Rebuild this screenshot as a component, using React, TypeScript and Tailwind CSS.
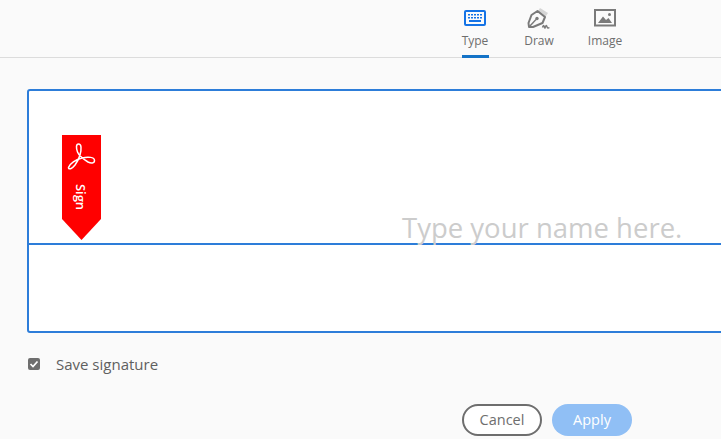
import React from "react";

function Tab({ label, active, icon }: { label: string; active?: boolean; icon: React.ReactNode }) {
  return (
    <div className="flex flex-col items-center h-[58px] pt-[8px] w-[40px]">
      <div className="h-[20px] flex items-center justify-center">{icon}</div>
      <span className="mt-[3px] text-[12px] leading-[20px] text-[#6e6e6e]">{label}</span>
      <div className={`mt-auto h-[3px] w-[27px] ${active ? "bg-[#1473c7]" : ""}`} />
    </div>
  );
}

const Keyboard = (
  <svg width="22" height="16" viewBox="0 0 22 16">
    <rect x="1" y="1" width="20" height="14" rx="1" fill="none" stroke="#1473e6" strokeWidth="2" />
    <g fill="#1473e6">
      <rect x="4" y="4" width="2" height="1.500" /><rect x="7" y="4" width="2" height="1.500" /><rect x="10" y="4" width="2" height="1.500" /><rect x="13" y="4" width="2" height="1.500" /><rect x="16" y="4" width="2" height="1.500" />
      <rect x="4" y="7" width="2" height="1.500" /><rect x="7" y="7" width="2" height="1.500" /><rect x="10" y="7" width="2" height="1.500" /><rect x="13" y="7" width="2" height="1.500" /><rect x="16" y="7" width="2" height="1.500" />
      <rect x="5" y="10" width="12" height="2" />
    </g>
  </svg>
);

const Pen = (
  <svg width="24" height="22" viewBox="0 0 24 22">
    <path d="M13 1 L21 6 L18 10.500 L10.500 5 Z" fill="#d6d6d6" />
    <path d="M10.500 4 L18 10 L15.500 16 L6 20 L2 20 L1.500 16 L4.500 8 Z" fill="none" stroke="#7a7a7a" strokeWidth="2" strokeLinejoin="round" />
    <path d="M2.500 19.500 L9 12.500" stroke="#7a7a7a" strokeWidth="1.400" fill="none" />
    <circle cx="10" cy="11.500" r="1.700" fill="#7a7a7a" />
    <path d="M15.500 20.500 q1 -3.500 1.700 -1 t1 1 q1 -3.500 1.700 -1 t2.500 1" stroke="#7a7a7a" strokeWidth="1.400" fill="none" />
  </svg>
);

const ImageIcon = (
  <svg width="22" height="18" viewBox="0 0 22 18">
    <rect x="1" y="1" width="20" height="15.500" fill="none" stroke="#7a7a7a" strokeWidth="2" />
    <path d="M4 14 L9 7.500 L12 11 L14.500 9 L18 14 Z" fill="#7a7a7a" />
    <circle cx="15.500" cy="5.500" r="1.500" fill="#7a7a7a" />
  </svg>
);

export default function App() {
  return (
    <div className="w-[721px] h-[439px] overflow-hidden bg-[#fafafa] font-['Open_Sans','Noto_Sans',sans-serif]">
      <header className="h-[58px] border-b border-[#dcdcdc] flex pl-[455px]">
        <Tab label="Type" active icon={Keyboard} />
        <div className="ml-[24px]">
          <Tab label="Draw" icon={Pen} />
        </div>
        <div className="ml-[26px]">
          <Tab label="Image" icon={ImageIcon} />
        </div>
      </header>

      <div className="relative ml-[27px] mt-[31px] w-[720px] h-[244px] bg-white border-2 border-[#2d7dd9] rounded-[3px]">
        <div className="absolute left-0 right-0 top-[152px] h-[2px] bg-[#2d7dd9]" />
        <div className="absolute left-[33px] top-[44px] w-[39px] h-[105px] bg-[#ff0000] [clip-path:polygon(0_0,100%_0,100%_80%,50%_100%,0_80%)] flex flex-col items-center">
          <svg width="29" height="29" viewBox="0 0 29 29" className="mt-[7px]">
            <path
              d="M11.500 2 C9 2 9 6 10.500 10 C12 14 17 17.500 21 20 C24 21.500 27.500 21.500 27.500 18.500 C27.500 15 21 14.500 15 16 C9 17.500 2.500 21.500 1.500 25.500 C1.500 28 5 27 8 23 C11.500 18 14.500 11 14 5 C13.800 3 13 2 11.500 2 Z"
              fill="none"
              stroke="#ffffff"
              strokeWidth="1.500"
            />
          </svg>
          <span className="mt-[13px] text-[13px] leading-[13px] font-semibold text-white rotate-90 h-[26px] flex items-center">Sign</span>
        </div>
        <span className="absolute left-[373px] top-[117px] text-[27.500px] leading-[40px] text-[#cccccc]">Type your name here.</span>
      </div>

      <div className="flex items-center ml-[28px] mt-[19px] h-[24px] gap-[16px]">
        <div className="w-[12px] h-[12px] rounded-[2px] bg-[#6e6e6e] flex items-center justify-center">
          <svg width="10" height="10" viewBox="0 0 10 10">
            <path d="M1.500 5 L4 7.500 L8.500 2.500" fill="none" stroke="#fff" strokeWidth="1.700" />
          </svg>
        </div>
        <span className="text-[15px] text-[#5f5f5f]">Save signature</span>
      </div>

      <div className="flex ml-[462px] mt-[28px] gap-[10px]">
        <button className="w-[80px] h-[32px] rounded-full border-2 border-[#6e6e6e] bg-white text-[14.500px] leading-none text-[#6e6e6e]">Cancel</button>
        <button className="w-[80px] h-[32px] rounded-full bg-[#90bff5] text-[14.500px] leading-none font-medium text-white">Apply</button>
      </div>
    </div>
  );
}
